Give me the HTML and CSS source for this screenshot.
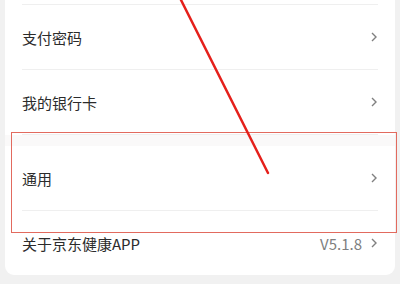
FILE: index.html
```html
<!DOCTYPE html>
<html lang="zh-CN">
<head>
    <meta charset="UTF-8">
    <meta name="viewport" content="width=device-width, initial-scale=1.0">
    <title>设置</title>
    <link rel="stylesheet" href="styles.css">
</head>
<body>
    <div class="card">
        <div class="row-stub"></div>
        <div class="row">
            <span class="label">支付密码</span>
            <span class="chevron"><svg width="6" height="10" viewBox="0 0 6 10"><polyline points="1,1 5,5 1,9" /></svg></span>
        </div>
        <div class="row">
            <span class="label">我的银行卡</span>
            <span class="chevron"><svg width="6" height="10" viewBox="0 0 6 10"><polyline points="1,1 5,5 1,9" /></svg></span>
        </div>
        <div class="band"></div>
        <div class="row">
            <span class="label">通用</span>
            <span class="chevron"><svg width="6" height="10" viewBox="0 0 6 10"><polyline points="1,1 5,5 1,9" /></svg></span>
        </div>
        <div class="row last">
            <span class="label">关于京东健康APP</span>
            <span class="value">V5.1.8</span>
            <span class="chevron"><svg width="6" height="10" viewBox="0 0 6 10"><polyline points="1,1 5,5 1,9" /></svg></span>
        </div>
    </div>

    <!-- annotation over the screenshot -->
    <div class="mark-box"></div>
    <svg class="mark-line" width="400" height="284" viewBox="0 0 400 284">
        <line x1="180" y1="-2" x2="268" y2="173" />
    </svg>
</body>
</html>
```

FILE: styles.css
```css
body {
    margin: 0;
    background-color: #f1f1f1;
    font-family: "Noto Sans CJK SC", "Noto Sans", sans-serif;
    height: 284px;
    overflow: hidden;
    position: relative;
}
.card {
    margin: 0 5px;
    background-color: #ffffff;
    border-radius: 0 0 9px 9px;
    padding: 0 17px;
}
.row-stub {
    height: 4px;
    border-bottom: 1px solid #efefef;
}
.row {
    display: flex;
    align-items: center;
    height: 64px;
    border-bottom: 1px solid #efefef;
}
.row.last {
    border-bottom: none;
}
.band {
    height: 11px;
    margin: 0 -17px;
    background-color: #faf9f9;
}
.label {
    flex: 1;
    font-size: 15px;
    color: #2b2b2b;
}
.value {
    font-size: 15px;
    color: #808080;
    margin-right: 9px;
}
.chevron {
    display: flex;
    margin-right: 1px;
}
.chevron polyline {
    fill: none;
    stroke: #808080;
    stroke-width: 1.4;
}
.mark-box {
    position: absolute;
    left: 11px;
    top: 132px;
    width: 384px;
    height: 99px;
    border: 1.5px solid #e26a5e;
}
.mark-line {
    position: absolute;
    left: 0;
    top: 0;
}
.mark-line line {
    stroke: #e5201b;
    stroke-width: 2.5;
    stroke-linecap: round;
}
```
